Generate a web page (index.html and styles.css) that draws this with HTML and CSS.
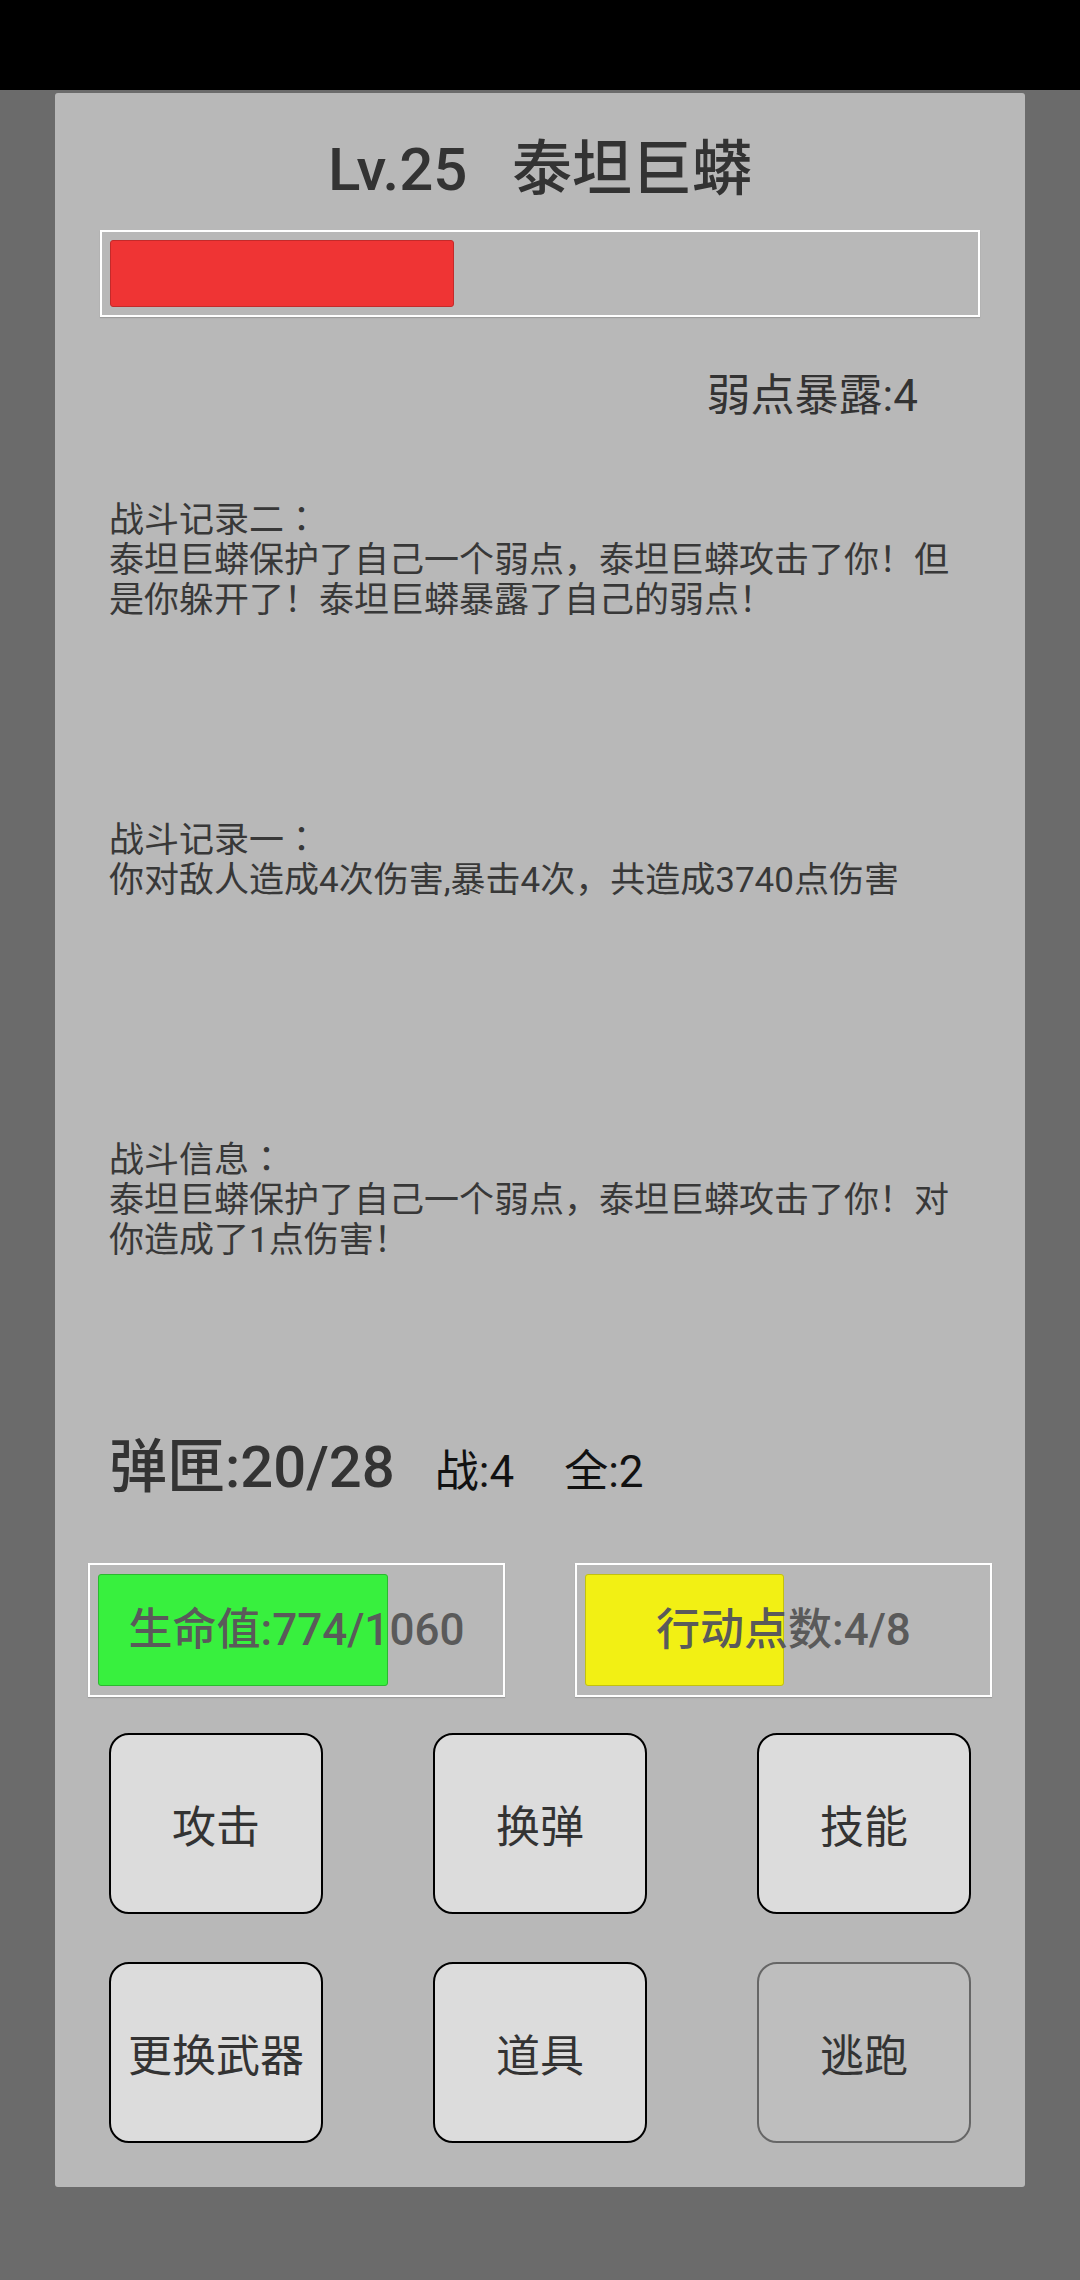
FILE: index.html
```html
<!DOCTYPE html>
<html lang="zh-CN">
  <head>
    <meta charset="UTF-8" />
    <meta name="viewport" content="width=device-width, initial-scale=1.0" />
    <title>战斗</title>
    <link rel="stylesheet" href="styles.css">
  </head>
  <body>
    <div class="status-bar"></div>
    <div class="panel">
      <div class="title">Lv.25&nbsp;&nbsp;&nbsp;泰坦巨蟒</div>
      <div class="hp-bar">
        <div class="hp-fill" style="width: 40%"></div>
      </div>
      <div class="weak">弱点暴露:4</div>

      <div class="log first">战斗记录二<span class="colon" lang="ja">：</span><br>泰坦巨蟒保护了自己一个弱点，泰坦巨蟒攻击了你！但是你躲开了！泰坦巨蟒暴露了自己的弱点！</div>
      <div class="log">战斗记录一<span class="colon" lang="ja">：</span><br>你对敌人造成4次伤害,暴击4次，共造成3740点伤害</div>
      <div class="log last">战斗信息<span class="colon" lang="ja">：</span><br>泰坦巨蟒保护了自己一个弱点，泰坦巨蟒攻击了你！对你造成了1点伤害！</div>

      <div class="ammo-row">
        <span class="ammo">弹匣:20/28</span>
        <span class="small">战:4</span>
        <span class="small">全:2</span>
      </div>

      <div class="stats">
        <div class="stat">
          <div class="fill green" style="width: 73%"></div>
          <span class="stat-text">生命值:774/1060</span>
        </div>
        <div class="stat">
          <div class="fill yellow" style="width: 50%"></div>
          <span class="stat-text">行动点数:4/8</span>
        </div>
      </div>

      <div class="buttons">
        <button>攻击</button>
        <button>换弹</button>
        <button>技能</button>
        <button>更换武器</button>
        <button>道具</button>
        <button class="disabled">逃跑</button>
      </div>
    </div>
  </body>
</html>
```

FILE: styles.css
```css
* {
  margin: 0;
  padding: 0;
  box-sizing: border-box;
}
body {
  width: 1080px;
  height: 2280px;
  background-color: #6b6b6b;
  font-family: Roboto, "Noto Sans CJK SC", sans-serif;
  color: #333;
  overflow: hidden;
}
.status-bar {
  height: 90px;
  background-color: #000;
}
.panel {
  width: 970px;
  height: 2094px;
  margin: 3px 0 0 55px;
  padding: 37px 45px 0;
  background-color: #b8b8b8;
  border-radius: 3px;
}
.title {
  height: 80px;
  line-height: 80px;
  font-size: 60px;
  font-weight: 500;
  text-align: center;
}
.hp-bar {
  height: 87px;
  margin-top: 20px;
  padding: 8px;
  border: 2px solid #fff;
  box-shadow: 0 1px 1px rgba(0, 0, 0, 0.15);
}
.hp-fill {
  height: 100%;
  background-color: #ef3434;
  border: 1px solid #c42a2a;
  border-radius: 3px;
}
.weak {
  height: 60px;
  line-height: 60px;
  margin-top: 49px;
  padding-right: 62px;
  font-size: 44px;
  text-align: right;
}
.log {
  height: 320px;
  padding-left: 9px;
  font-size: 35px;
  line-height: 40px;
  color: #383838;
}
.log.first {
  margin-top: 71px;
}
.log.last {
  height: 290px;
}
.colon {
  font-family: "Noto Sans CJK JP", sans-serif;
}
.ammo-row {
  height: 80px;
  line-height: 80px;
  padding-left: 9px;
  display: flex;
  align-items: baseline;
}
.ammo {
  font-size: 58px;
  font-weight: 500;
  margin-right: 40px;
}
.small {
  font-size: 44px;
  color: #111;
  margin-right: 50px;
}
.stats {
  margin: 56px -12px 0;
  display: flex;
  justify-content: space-between;
}
.stat {
  position: relative;
  width: 417px;
  height: 134px;
  padding: 9px 8px;
  border: 2px solid #fff;
  box-shadow: 0 1px 1px rgba(0, 0, 0, 0.15);
}
.fill {
  height: 100%;
  border-radius: 3px;
}
.green {
  background-color: #38f03e;
  border: 1px solid #2bb830;
}
.yellow {
  background-color: #f2f014;
  border: 1px solid #c2c010;
}
.stat-text {
  position: absolute;
  left: 0;
  right: 0;
  top: 50%;
  transform: translateY(-50%);
  text-align: center;
  font-size: 44px;
  font-weight: 500;
  line-height: 60px;
  color: #5a5a5a;
}
.buttons {
  margin: 36px 9px 0;
  display: grid;
  grid-template-columns: repeat(3, 214px);
  grid-auto-rows: 181px;
  column-gap: 110px;
  row-gap: 48px;
}
button {
  font-family: Roboto, "Noto Sans CJK SC", sans-serif;
  font-size: 44px;
  color: #333;
  background-color: #dcdcdc;
  border: 2px solid #000;
  border-radius: 20px;
}
button.disabled {
  background-color: #bebebe;
  border-color: #666;
}
```
